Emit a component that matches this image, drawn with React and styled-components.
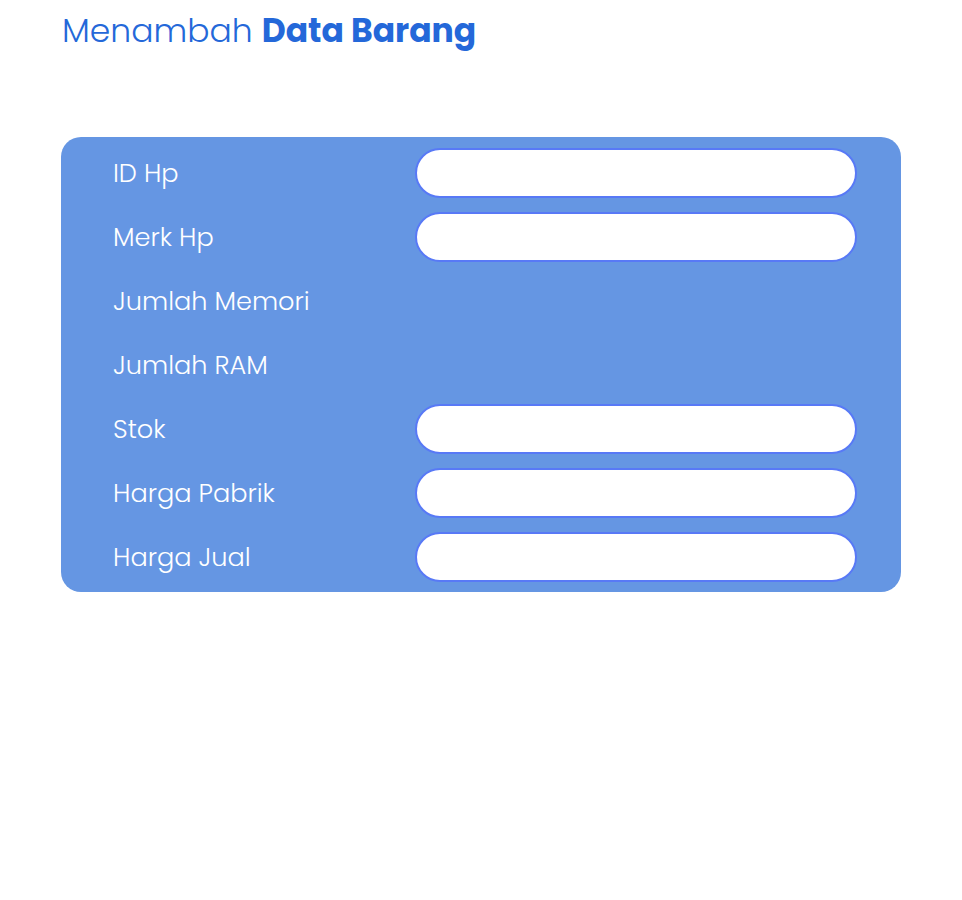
import React from "react"
import styled, { createGlobalStyle } from "styled-components"

const GlobalStyle = createGlobalStyle`
    body {
        margin: 0;
        background: #ffffff;
        font-family: Poppins, "Inter", sans-serif;
    }
`

const Page = styled.div`
    width: 840px;
    margin: 0 auto;
`

const Title = styled.h1`
    margin: 0;
    padding: 6px 0 0 1px;
    height: 137px;
    box-sizing: border-box;
    font-size: 33px;
    font-weight: 300;
    color: #2468d9;

    b {
        font-weight: 700;
    }
`

const Card = styled.form`
    background: #6596e3;
    border-radius: 20px;
    padding: 11px 44px 10px 52px;
    display: flex;
    flex-direction: column;
    gap: 14px;
`

const Row = styled.div`
    display: grid;
    grid-template-columns: 302px 1fr;
    align-items: center;
    height: 50px;
`

const Label = styled.label`
    font-size: 25.6px;
    font-weight: 300;
    color: #ffffff;
`

const Input = styled.input`
    box-sizing: border-box;
    width: 100%;
    height: 50px;
    border: 2px solid #5879f6;
    border-radius: 25px;
    background: #ffffff;
    outline: none;
    padding: 0 20px;
    font-family: inherit;
    font-size: 18px;
`

const fields = [
    { label: "ID Hp", input: true },
    { label: "Merk Hp", input: true },
    { label: "Jumlah Memori", input: false },
    { label: "Jumlah RAM", input: false },
    { label: "Stok", input: true },
    { label: "Harga Pabrik", input: true },
    { label: "Harga Jual", input: true },
]

const App = () => (
    <>
        <GlobalStyle />
        <Page>
            <Title>Menambah <b>Data Barang</b></Title>
            <Card>
                {fields.map((f) => (
                    <Row key={f.label}>
                        <Label>{f.label}</Label>
                        {f.input ? <Input type="text" /> : <span />}
                    </Row>
                ))}
            </Card>
        </Page>
    </>
)

export default App
